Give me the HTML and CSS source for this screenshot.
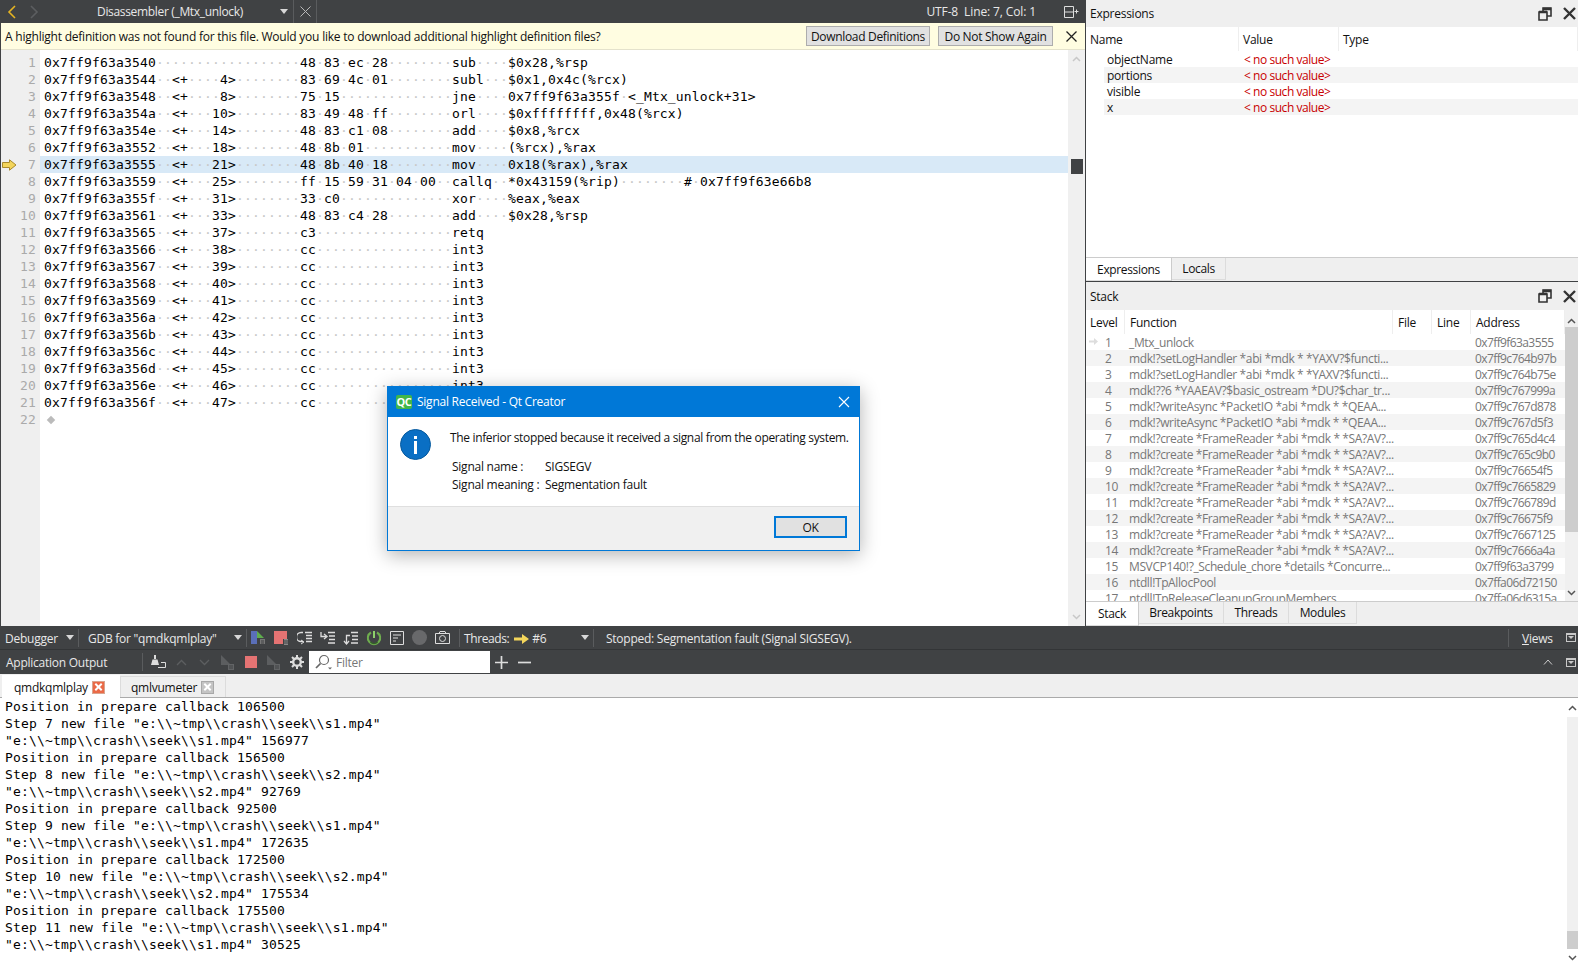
FILE: index.html
```html
<!DOCTYPE html>
<html lang="en">
<head>
<meta charset="UTF-8">
<title>Disassembler (_Mtx_unlock) - Qt Creator</title>
<link rel="stylesheet" href="styles.css">
</head>
<body>

<div class="app">
    <div class="upper">
        <div class="editor-area">
            <div class="doc-bar">
                <svg class="nav-back" width="10" height="14" viewBox="0 0 10 14"><path d="M8 1L2 7l6 6" fill="none" stroke="#e6b422" stroke-width="1.6"/></svg>
                <svg class="nav-fwd" width="10" height="14" viewBox="0 0 10 14"><path d="M2 1l6 6-6 6" fill="none" stroke="#5c5e60" stroke-width="1.6"/></svg>
                <span class="doc-title">Disassembler (_Mtx_unlock)</span>
                <span class="arrow doc-arrow"></span>
                <span class="doc-close">
                    <svg width="11" height="11" viewBox="0 0 11 11"><path d="M.5.500l10 10M10.500.500l-10 10" stroke="#b8b8b8"/></svg>
                </span>
                <span class="doc-info">UTF-8&nbsp; Line: 7, Col: 1</span>
                <svg class="split-ic" width="15" height="12" viewBox="0 0 15 12"><path d="M.5.5h9v11h-9zM.5 6h9" fill="none" stroke="#ddd"/><path d="M12.5 3.500v4M10.500 5.500h4" stroke="#ddd"/></svg>
            </div>
            <div class="info-bar">
                <span class="info-text">A highlight definition was not found for this file. Would you like to download additional highlight definition files?</span>
                <button class="info-btn btn-download">Download Definitions</button>
                <button class="info-btn btn-hide">Do Not Show Again</button>
                <svg class="info-close" width="11" height="11" viewBox="0 0 11 11"><path d="M.5.500l10 10M10.500.500l-10 10" stroke="#222" stroke-width="1.3"/></svg>
            </div>
            <div class="editor">
                <div class="gutter">
                    <div>1</div><div>2</div><div>3</div><div>4</div><div>5</div><div>6</div>
                    <div class="cur-num">
                        <svg class="cur-arrow" width="15" height="12" viewBox="0 0 15 12"><path d="M.5 3.500h7V.8L14 6l-6.500 5.200V8.500h-7z" fill="#f3d55b" stroke="#a8892c"/></svg>
                        7
                    </div>
                    <div>8</div><div>9</div><div>10</div><div>11</div><div>12</div><div>13</div><div>14</div>
                    <div>15</div><div>16</div><div>17</div><div>18</div><div>19</div><div>20</div><div>21</div><div>22</div>
                </div>
                <div class="code">
                    <div class="ln">0x7ff9f63a3540<i>··················</i>48<i>·</i>83<i>·</i>ec<i>·</i>28<i>········</i>sub<i>····</i>$0x28,%rsp</div>
                    <div class="ln">0x7ff9f63a3544<i>··</i>&lt;+<i>····</i>4&gt;<i>········</i>83<i>·</i>69<i>·</i>4c<i>·</i>01<i>········</i>subl<i>···</i>$0x1,0x4c(%rcx)</div>
                    <div class="ln">0x7ff9f63a3548<i>··</i>&lt;+<i>····</i>8&gt;<i>········</i>75<i>·</i>15<i>··············</i>jne<i>····</i>0x7ff9f63a355f<i>·</i>&lt;_Mtx_unlock+31&gt;</div>
                    <div class="ln">0x7ff9f63a354a<i>··</i>&lt;+<i>···</i>10&gt;<i>········</i>83<i>·</i>49<i>·</i>48<i>·</i>ff<i>········</i>orl<i>····</i>$0xffffffff,0x48(%rcx)</div>
                    <div class="ln">0x7ff9f63a354e<i>··</i>&lt;+<i>···</i>14&gt;<i>········</i>48<i>·</i>83<i>·</i>c1<i>·</i>08<i>········</i>add<i>····</i>$0x8,%rcx</div>
                    <div class="ln">0x7ff9f63a3552<i>··</i>&lt;+<i>···</i>18&gt;<i>········</i>48<i>·</i>8b<i>·</i>01<i>···········</i>mov<i>····</i>(%rcx),%rax</div>
                    <div class="ln ln-cur">0x7ff9f63a3555<i>··</i>&lt;+<i>···</i>21&gt;<i>········</i>48<i>·</i>8b<i>·</i>40<i>·</i>18<i>········</i>mov<i>····</i>0x18(%rax),%rax</div>
                    <div class="ln">0x7ff9f63a3559<i>··</i>&lt;+<i>···</i>25&gt;<i>········</i>ff<i>·</i>15<i>·</i>59<i>·</i>31<i>·</i>04<i>·</i>00<i>··</i>callq<i>··</i>*0x43159(%rip)<i>········</i>#<i>·</i>0x7ff9f63e66b8</div>
                    <div class="ln">0x7ff9f63a355f<i>··</i>&lt;+<i>···</i>31&gt;<i>········</i>33<i>·</i>c0<i>··············</i>xor<i>····</i>%eax,%eax</div>
                    <div class="ln">0x7ff9f63a3561<i>··</i>&lt;+<i>···</i>33&gt;<i>········</i>48<i>·</i>83<i>·</i>c4<i>·</i>28<i>········</i>add<i>····</i>$0x28,%rsp</div>
                    <div class="ln">0x7ff9f63a3565<i>··</i>&lt;+<i>···</i>37&gt;<i>········</i>c3<i>·················</i>retq</div>
                    <div class="ln">0x7ff9f63a3566<i>··</i>&lt;+<i>···</i>38&gt;<i>········</i>cc<i>·················</i>int3</div>
                    <div class="ln">0x7ff9f63a3567<i>··</i>&lt;+<i>···</i>39&gt;<i>········</i>cc<i>·················</i>int3</div>
                    <div class="ln">0x7ff9f63a3568<i>··</i>&lt;+<i>···</i>40&gt;<i>········</i>cc<i>·················</i>int3</div>
                    <div class="ln">0x7ff9f63a3569<i>··</i>&lt;+<i>···</i>41&gt;<i>········</i>cc<i>·················</i>int3</div>
                    <div class="ln">0x7ff9f63a356a<i>··</i>&lt;+<i>···</i>42&gt;<i>········</i>cc<i>·················</i>int3</div>
                    <div class="ln">0x7ff9f63a356b<i>··</i>&lt;+<i>···</i>43&gt;<i>········</i>cc<i>·················</i>int3</div>
                    <div class="ln">0x7ff9f63a356c<i>··</i>&lt;+<i>···</i>44&gt;<i>········</i>cc<i>·················</i>int3</div>
                    <div class="ln">0x7ff9f63a356d<i>··</i>&lt;+<i>···</i>45&gt;<i>········</i>cc<i>·················</i>int3</div>
                    <div class="ln">0x7ff9f63a356e<i>··</i>&lt;+<i>···</i>46&gt;<i>········</i>cc<i>·················</i>int3</div>
                    <div class="ln">0x7ff9f63a356f<i>··</i>&lt;+<i>···</i>47&gt;<i>········</i>cc<i>·················</i>int3</div>
                    <div class="ln"><span class="eof"></span></div>
                </div>
                <div class="editor-scroll">
                    <svg width="9" height="6" viewBox="0 0 9 6"><path d="M1 5l3.500-3.500L8 5" fill="none" stroke="#c8c8c8" stroke-width="1.500"/></svg>
                    <div class="scroll-mark"></div>
                    <svg class="scroll-down" width="9" height="6" viewBox="0 0 9 6"><path d="M1 1l3.500 3.500L8 1" fill="none" stroke="#c8c8c8" stroke-width="1.500"/></svg>
                </div>
            </div>
        </div>

        <div class="dock">
            <div class="pane pane-expr">
                <div class="pane-head">
                    <span>Expressions</span>
                    <svg class="float-ic" width="14" height="14" viewBox="0 0 14 14"><path d="M1 5h8v8H1zM5 5V1h8v8H9" fill="none" stroke="#333" stroke-width="1.600"/><path d="M1 5h8M5 2h8" stroke="#333" stroke-width="2.500"/></svg>
                    <svg class="close-ic" width="13" height="13" viewBox="0 0 13 13"><path d="M1 1l11 11M12 1L1 12" stroke="#333" stroke-width="2.400"/></svg>
                </div>
                <div class="expr-head">
                    <div>Name</div><div>Value</div><div>Type</div>
                </div>
                <div class="expr-row"><span>objectName</span><span class="no-val">&lt; no such value&gt;</span></div>
                <div class="expr-row alt"><span>portions</span><span class="no-val">&lt; no such value&gt;</span></div>
                <div class="expr-row"><span>visible</span><span class="no-val">&lt; no such value&gt;</span></div>
                <div class="expr-row alt"><span>x</span><span class="no-val">&lt; no such value&gt;</span></div>
            </div>
            <div class="tabs tabs-expr">
                <span class="tab tab-on tab-expressions">Expressions</span>
                <span class="tab tab-locals">Locals</span>
            </div>
            <div class="pane pane-stack">
                <div class="pane-head pane-head-stack">
                    <span>Stack</span>
                    <svg class="float-ic" width="14" height="14" viewBox="0 0 14 14"><path d="M1 5h8v8H1zM5 5V1h8v8H9" fill="none" stroke="#333" stroke-width="1.600"/><path d="M1 5h8M5 2h8" stroke="#333" stroke-width="2.500"/></svg>
                    <svg class="close-ic" width="13" height="13" viewBox="0 0 13 13"><path d="M1 1l11 11M12 1L1 12" stroke="#333" stroke-width="2.400"/></svg>
                </div>
                <div class="stack-body">
                    <div class="stack-table">
                        <div class="stack-head">
                            <div>Level</div><div>Function</div><div>File</div><div>Line</div><div>Address</div>
                        </div>
                        <div class="stack-row"><span class="lvl"><svg class="frame-arrow" width="9" height="7" viewBox="0 0 9 7"><path d="M0 2.500h5V0l4 3.500L5 7V4.500H0z" fill="#ddd"/></svg>1</span><span>_Mtx_unlock</span><span>0x7ff9f63a3555</span></div>
                        <div class="stack-row alt"><span class="lvl">2</span><span>mdk!?setLogHandler *abi *mdk * *YAXV?$functi...</span><span>0x7ff9c764b97b</span></div>
                        <div class="stack-row"><span class="lvl">3</span><span>mdk!?setLogHandler *abi *mdk * *YAXV?$functi...</span><span>0x7ff9c764b75e</span></div>
                        <div class="stack-row alt"><span class="lvl">4</span><span>mdk!??6 *YAAEAV?$basic_ostream *DU?$char_tr...</span><span>0x7ff9c767999a</span></div>
                        <div class="stack-row"><span class="lvl">5</span><span>mdk!?writeAsync *PacketIO *abi *mdk * *QEAA...</span><span>0x7ff9c767d878</span></div>
                        <div class="stack-row alt"><span class="lvl">6</span><span>mdk!?writeAsync *PacketIO *abi *mdk * *QEAA...</span><span>0x7ff9c767d5f3</span></div>
                        <div class="stack-row"><span class="lvl">7</span><span>mdk!?create *FrameReader *abi *mdk * *SA?AV?...</span><span>0x7ff9c765d4c4</span></div>
                        <div class="stack-row alt"><span class="lvl">8</span><span>mdk!?create *FrameReader *abi *mdk * *SA?AV?...</span><span>0x7ff9c765c9b0</span></div>
                        <div class="stack-row"><span class="lvl">9</span><span>mdk!?create *FrameReader *abi *mdk * *SA?AV?...</span><span>0x7ff9c76654f5</span></div>
                        <div class="stack-row alt"><span class="lvl">10</span><span>mdk!?create *FrameReader *abi *mdk * *SA?AV?...</span><span>0x7ff9c7665829</span></div>
                        <div class="stack-row"><span class="lvl">11</span><span>mdk!?create *FrameReader *abi *mdk * *SA?AV?...</span><span>0x7ff9c766789d</span></div>
                        <div class="stack-row alt"><span class="lvl">12</span><span>mdk!?create *FrameReader *abi *mdk * *SA?AV?...</span><span>0x7ff9c76675f9</span></div>
                        <div class="stack-row"><span class="lvl">13</span><span>mdk!?create *FrameReader *abi *mdk * *SA?AV?...</span><span>0x7ff9c7667125</span></div>
                        <div class="stack-row alt"><span class="lvl">14</span><span>mdk!?create *FrameReader *abi *mdk * *SA?AV?...</span><span>0x7ff9c7666a4a</span></div>
                        <div class="stack-row"><span class="lvl">15</span><span>MSVCP140!?_Schedule_chore *details *Concurre...</span><span>0x7ff9f63a3799</span></div>
                        <div class="stack-row alt"><span class="lvl">16</span><span>ntdll!TpAllocPool</span><span>0x7ffa06d72150</span></div>
                        <div class="stack-row"><span class="lvl">17</span><span>ntdll!TpReleaseCleanupGroupMembers</span><span>0x7ffa06d6315a</span></div>
                    </div>
                    <div class="stack-scroll">
                        <svg width="9" height="6" viewBox="0 0 9 6"><path d="M1 5l3.500-3.500L8 5" fill="none" stroke="#555" stroke-width="1.500"/></svg>
                        <div class="stack-thumb"></div>
                        <svg class="scroll-down" width="9" height="6" viewBox="0 0 9 6"><path d="M1 1l3.500 3.500L8 1" fill="none" stroke="#555" stroke-width="1.500"/></svg>
                    </div>
                </div>
            </div>
            <div class="tabs tabs-stack">
                <span class="tab tab-on tab-s1">Stack</span>
                <span class="tab tab-s2">Breakpoints</span>
                <span class="tab tab-s3">Threads</span>
                <span class="tab tab-s4">Modules</span>
            </div>
        </div>
    </div>

    <div class="bar debug-bar">
        <div class="combo combo-mode">Debugger<span class="arrow"></span></div>
        <div class="combo combo-engine">GDB for "qmdkqmlplay"<span class="arrow"></span></div>
        <span class="tool"><svg width="16" height="14" viewBox="0 0 16 14"><rect y="0" width="6" height="13" fill="#5a6fb8"/><path d="M6 0l7 7H6z" fill="#5fae4d"/><path d="M9 8h5v5H9z" fill="#777"/><path d="M10 10h3M10 12h3" stroke="#404244"/></svg></span>
        <span class="tool"><svg width="16" height="14" viewBox="0 0 16 14"><rect y="0" width="13" height="13" fill="#e57373"/><path d="M9 8h6v6H9z" fill="#404244"/><path d="M10 8h4v6h-4z" fill="#888"/><path d="M10 10h4M10 12h4" stroke="#404244"/></svg></span>
        <span class="tool"><svg width="15" height="14" viewBox="0 0 15 14" fill="none" stroke="#ddd"><path d="M6 1.500H4a4.500 4.500 0 0 0 0 9h2" stroke-width="1.300"/><path d="M4 9l3 2-3 2" /><path d="M8 1.500h7M9 4.500h6M9 7.500h6M9 10.500h6" stroke-width="1.300"/></svg></span>
        <span class="tool"><svg width="15" height="14" viewBox="0 0 15 14" fill="none" stroke="#ddd"><path d="M1 1v4.500h5" stroke-width="1.300"/><path d="M4 3l3 2.500L4 8" stroke-width="1.300"/><path d="M8 1.500h7M9 5h6M9 8.500h6M8 12h7" stroke-width="1.300"/></svg></span>
        <span class="tool"><svg width="15" height="14" viewBox="0 0 15 14" fill="none" stroke="#ddd"><path d="M7 4.500H3.500v8" stroke-width="1.300"/><path d="M1 10l2.500 3L6 10" stroke-width="1.300"/><path d="M8 1.500h7M9 5h6M9 8.500h6M8 12h7" stroke-width="1.300"/></svg></span>
        <span class="tool"><svg width="16" height="16" viewBox="0 0 16 16" fill="none"><path d="M5 2.500a6.200 6.200 0 1 0 6 0" stroke="#6fae4f" stroke-width="2"/><path d="M8 1v7" stroke="#8dd06a" stroke-width="2"/><path d="M4.500 12a5 5 0 0 0 7 0" stroke="#355e2a" stroke-width="1.500"/></svg></span>
        <span class="tool"><svg width="14" height="14" viewBox="0 0 14 14" fill="none" stroke="#ddd"><path d="M.5.500h13v13H.5z"/><path d="M3 4h8M3 7h5M3 10h3" stroke-width="1.200"/></svg></span>
        <span class="tool"><svg width="15" height="15" viewBox="0 0 15 15"><circle cx="7.500" cy="7.500" r="7.500" fill="#68696b"/></svg></span>
        <span class="tool"><svg width="15" height="13" viewBox="0 0 15 13" fill="none" stroke="#ddd"><path d="M.5 2.500h14v10H.5zM4 2.500l1-2h5l1 2"/><circle cx="7.500" cy="7.500" r="3"/></svg></span>
        <div class="threads">
            <span>Threads:</span>
            <svg width="15" height="10" viewBox="0 0 15 10"><path d="M0 3.500h8V0l7 5-7 5V6.500H0z" fill="#f3d55b"/></svg>
            <span class="thread-no">#6</span>
            <span class="arrow"></span>
        </div>
        <div class="status">Stopped: Segmentation fault (Signal SIGSEGV).</div>
        <div class="views"><u>V</u>iews</div>
        <span class="pane-btn"></span>
    </div>

    <div class="bar output-bar">
        <div class="output-title">Application Output</div>
        <span class="tool"><svg width="15" height="14" viewBox="0 0 15 14"><path d="M3 0h2v4H3z" fill="#ddd"/><path d="M1.500 4.500h5L8 10H0z" fill="#ddd"/><path d="M10 7.500h4.500v5H7" fill="none" stroke="#ddd"/></svg></span>
        <span class="tool"><svg width="11" height="7" viewBox="0 0 11 7"><path d="M1 6l4.500-4.500L10 6" fill="none" stroke="#5c5e60" stroke-width="1.300"/></svg></span>
        <span class="tool"><svg width="11" height="7" viewBox="0 0 11 7"><path d="M1 1l4.500 4.500L10 1" fill="none" stroke="#5c5e60" stroke-width="1.300"/></svg></span>
        <span class="tool"><svg width="14" height="15" viewBox="0 0 14 15"><path d="M0 0l10 10H0z" fill="#5c5e60"/><path d="M7 9h6v6H7z" fill="#626466"/><path d="M8 11h4M8 13h4" stroke="#404244"/></svg></span>
        <span class="tool"><span class="stop-square"></span></span>
        <span class="tool"><svg width="14" height="15" viewBox="0 0 14 15"><path d="M0 0l10 10H0z" fill="#5c5e60"/><path d="M7 9h6v6H7z" fill="#626466"/><path d="M8 11h4M8 13h4" stroke="#404244"/></svg></span>
        <span class="tool"><svg width="14" height="14" viewBox="0 0 14 14"><circle cx="7" cy="7" r="3.800" fill="none" stroke="#ddd" stroke-width="2.400"/><path d="M7 0v3M7 11v3M0 7h3M11 7h3M2 2l2 2M10 10l2 2M12 2l-2 2M4 10l-2 2" stroke="#ddd" stroke-width="2"/></svg></span>
        <div class="filter">
            <svg width="18" height="16" viewBox="0 0 18 16" fill="none" stroke="#666"><circle cx="9" cy="6" r="4.500" stroke-width="1.200"/><path d="M5.500 9.500L1 14" stroke-width="1.700"/><path d="M13 13.500h4l-2 2z" fill="#666" stroke="none"/></svg>
            <span>Filter</span>
        </div>
        <svg class="plus-ic" width="13" height="13" viewBox="0 0 13 13"><path d="M6.500 0v13M0 6.500h13" stroke="#ddd" stroke-width="1.700"/></svg>
        <svg class="minus-ic" width="13" height="13" viewBox="0 0 13 13"><path d="M0 6.500h13" stroke="#ddd" stroke-width="1.700"/></svg>
        <svg class="up-ic" width="10" height="6" viewBox="0 0 10 6"><path d="M1 5.500L5 1l4 4.500" fill="none" stroke="#ccc"/></svg>
        <span class="pane-btn"></span>
    </div>

    <div class="out-tabs">
        <span class="out-tab out-tab-on">qmdkqmlplay<span class="tab-x tab-x-red"></span></span>
        <span class="out-tab">qmlvumeter<span class="tab-x"></span></span>
    </div>

    <div class="output">
        <div class="output-text">
            <div>Position in prepare callback 106500</div>
            <div>Step 7 new file "e:\\~tmp\\crash\\seek\\s1.mp4"</div>
            <div>"e:\\~tmp\\crash\\seek\\s1.mp4" 156977</div>
            <div>Position in prepare callback 156500</div>
            <div>Step 8 new file "e:\\~tmp\\crash\\seek\\s2.mp4"</div>
            <div>"e:\\~tmp\\crash\\seek\\s2.mp4" 92769</div>
            <div>Position in prepare callback 92500</div>
            <div>Step 9 new file "e:\\~tmp\\crash\\seek\\s1.mp4"</div>
            <div>"e:\\~tmp\\crash\\seek\\s1.mp4" 172635</div>
            <div>Position in prepare callback 172500</div>
            <div>Step 10 new file "e:\\~tmp\\crash\\seek\\s2.mp4"</div>
            <div>"e:\\~tmp\\crash\\seek\\s2.mp4" 175534</div>
            <div>Position in prepare callback 175500</div>
            <div>Step 11 new file "e:\\~tmp\\crash\\seek\\s1.mp4"</div>
            <div>"e:\\~tmp\\crash\\seek\\s1.mp4" 30525</div>
        </div>
        <div class="output-scroll">
            <svg width="9" height="6" viewBox="0 0 9 6"><path d="M1 5l3.500-3.500L8 5" fill="none" stroke="#555" stroke-width="1.500"/></svg>
            <div class="output-track"></div>
            <div class="output-thumb"></div>
            <svg width="9" height="6" viewBox="0 0 9 6"><path d="M1 1l3.500 3.500L8 1" fill="none" stroke="#555" stroke-width="1.500"/></svg>
        </div>
    </div>

    <!-- message box floats over the editor -->
    <div class="dialog">
        <div class="dialog-title">
            <span class="qc-logo">QC</span>
            <span class="dialog-caption">Signal Received - Qt Creator</span>
            <svg class="dialog-x" width="12" height="12" viewBox="0 0 12 12"><path d="M1 1l10 10M11 1L1 11" stroke="#fff" stroke-width="1.100"/></svg>
        </div>
        <div class="dialog-body">
            <div class="info-ic"><span class="info-dot"></span><span class="info-stem"></span></div>
            <div class="dialog-msg">
                <p class="msg-lead">The inferior stopped because it received a signal from the operating system.</p>
                <div class="msg-grid">
                    <span>Signal name :</span><span>SIGSEGV</span>
                    <span>Signal meaning :</span><span>Segmentation fault</span>
                </div>
            </div>
        </div>
        <div class="dialog-foot">
            <button class="ok-btn">OK</button>
        </div>
    </div>
</div>

</body>
</html>
```

FILE: styles.css
```css
* {
    box-sizing: border-box;
}
body {
    margin: 0;
    font-family: "Open Sans", sans-serif;
    font-size: 12px;
    letter-spacing: -0.25px;
    color: #111;
    background: #404244;
}
.app {
    position: relative;
    width: 1578px;
    height: 963px;
    display: flex;
    flex-direction: column;
    overflow: hidden;
}
.upper {
    display: flex;
    height: 626px;
}

/* editor side */
.editor-area {
    width: 1086px;
    display: flex;
    flex-direction: column;
    border-left: 1px solid #404244;
    border-right: 1px solid #404244;
    background: #fff;
}
.doc-bar {
    height: 23px;
    margin-left: -1px;
    display: flex;
    align-items: center;
    background: #404244;
    color: #e8e8e8;
}
.nav-back {
    margin-left: 7px;
}
.nav-fwd {
    margin-left: 12px;
}
.doc-title {
    margin-left: 58px;
    width: 183px;
    letter-spacing: -0.33px;
}
.doc-close {
    margin-left: 5px;
    height: 23px;
    width: 24px;
    display: flex;
    align-items: center;
    justify-content: center;
    border-left: 1px solid #5a5c5e;
    border-right: 1px solid #5a5c5e;
}
.doc-info {
    margin-left: auto;
    margin-right: 28px;
    letter-spacing: -0.12px;
}
.split-ic {
    margin-right: 6px;
}
.arrow {
    display: inline-block;
    width: 0;
    height: 0;
    border-left: 4px solid transparent;
    border-right: 4px solid transparent;
    border-top: 5px solid #d8d8d8;
}
.info-bar {
    height: 27px;
    display: flex;
    align-items: center;
    padding-left: 4px;
    background: #fffde1;
    border-bottom: 1px solid #e4e2cc;
}
.info-text {
    width: 801px;
    letter-spacing: -0.22px;
}
.info-btn {
    height: 20px;
    padding: 0;
    font: inherit;
    letter-spacing: -0.32px;
    color: #111;
    background: #e1e1e1;
    border: 1px solid #adadad;
}
.btn-download {
    width: 124px;
}
.btn-hide {
    width: 115px;
    margin-left: 8px;
}
.info-close {
    margin-left: 13px;
}
.editor {
    flex: 1;
    display: flex;
    min-height: 0;
}
.gutter {
    width: 39px;
    padding-top: 4px;
    background: #efefef;
    font-family: "DejaVu Sans Mono", monospace;
    font-size: 13px;
    letter-spacing: 0.17px;
    line-height: 17px;
    text-align: right;
    color: #aaa;
}
.gutter div {
    height: 17px;
    padding-right: 4px;
}
.cur-num {
    position: relative;
}
.cur-arrow {
    position: absolute;
    left: 1px;
    top: 3px;
}
.code {
    flex: 1;
    padding-top: 4px;
    font-family: "DejaVu Sans Mono", monospace;
    font-size: 13px;
    letter-spacing: 0.17px;
    line-height: 17px;
    color: #000;
}
.ln {
    height: 17px;
    padding-left: 4px;
    white-space: pre;
}
.ln i {
    font-style: normal;
    color: #c8c8c8;
}
.ln-cur {
    background: #d8e9f7;
}
.eof {
    display: inline-block;
    width: 6px;
    height: 6px;
    margin-left: 4px;
    margin-bottom: 1px;
    background: #bbb;
    transform: rotate(45deg);
}
.editor-scroll {
    position: relative;
    width: 17px;
    padding-top: 6px;
    display: flex;
    flex-direction: column;
    align-items: center;
    background: #f0f0f0;
}
.scroll-mark {
    position: absolute;
    left: 3px;
    top: 109px;
    width: 12px;
    height: 15px;
    background: #404244;
}
.scroll-down {
    margin-top: auto;
    margin-bottom: 6px;
}

/* debugger docks */
.dock {
    width: 492px;
    display: flex;
    flex-direction: column;
    background: #fff;
}
.pane-expr {
    height: 257px;
}
.pane-head {
    height: 27px;
    padding-left: 4px;
    padding-right: 2px;
    display: flex;
    align-items: center;
    background: #efefef;
}
.pane-head-stack {
    height: 28px;
}
.float-ic {
    margin-left: auto;
    margin-right: 11px;
}
.expr-head {
    height: 24px;
    display: grid;
    grid-template-columns: 153px 100px 1fr;
    line-height: 26px;
}
.expr-head div {
    padding-left: 4px;
    height: 24px;
    border-right: 1px solid #eee;
}
.expr-row {
    height: 16px;
    margin-left: 18px;
    display: grid;
    grid-template-columns: 135px 1fr;
    line-height: 18px;
}
.expr-row span:first-child {
    padding-left: 3px;
}
.expr-row span:last-child {
    padding-left: 5px;
}
.alt {
    background: #f4f4f4;
}
.no-val {
    color: #c80000;
    letter-spacing: -0.45px;
}
.tabs {
    display: flex;
    background: #efefef;
}
.tabs-expr {
    height: 25px;
    border-top: 1px solid #ccc;
    border-bottom: 1px solid #404244;
}
.tabs-stack {
    flex: 1;
    border-top: 1px solid #ccc;
}
.tab {
    display: flex;
    align-items: center;
    justify-content: center;
    height: 22px;
    letter-spacing: -0.35px;
    border-right: 1px solid #dcdcdc;
    border-bottom: 1px solid #dcdcdc;
}
.tab-on {
    height: 24px;
    background: #fff;
    border-right: 1px solid #ccc;
}
.tab-expressions {
    width: 86px;
    padding-top: 1px;
    height: 23px;
}
.tab-locals {
    width: 54px;
}
.tab-s1 {
    width: 53px;
}
.tab-s2 {
    width: 85px;
}
.tab-s3 {
    width: 65px;
}
.tab-s4 {
    width: 68px;
}
.pane-stack {
    display: flex;
    flex-direction: column;
}
.stack-body {
    height: 291px;
    display: flex;
    overflow: hidden;
}
.stack-table {
    width: 479px;
}
.stack-head {
    height: 24px;
    display: grid;
    grid-template-columns: 39px 268px 39px 39px 94px;
    line-height: 26px;
}
.stack-head div {
    height: 24px;
    padding-left: 5px;
    border-right: 1px solid #eee;
}
.stack-head div:first-child {
    padding-left: 4px;
}
.stack-row {
    height: 16px;
    display: grid;
    grid-template-columns: 39px 346px 94px;
    line-height: 18px;
    color: #777;
    white-space: nowrap;
    letter-spacing: -0.38px;
}
.stack-row span:nth-child(2) {
    padding-left: 4px;
}
.stack-row span:nth-child(3) {
    padding-left: 4px;
    letter-spacing: -0.6px;
}
.lvl {
    position: relative;
    padding-left: 19px;
}
.frame-arrow {
    position: absolute;
    left: 3px;
    top: 4px;
}
.stack-scroll {
    width: 13px;
    padding-top: 8px;
    display: flex;
    flex-direction: column;
    align-items: center;
    background: #f0f0f0;
}
.stack-thumb {
    width: 100%;
    height: 205px;
    margin-top: 3px;
    background: #cdcdcd;
}
.stack-scroll .scroll-down {
    margin-bottom: 5px;
}

/* bottom bars */
.bar {
    height: 24px;
    flex: none;
    display: flex;
    align-items: center;
    color: #e8e8e8;
    background: #404244;
}
.debug-bar {
    border-bottom: 1px solid #333537;
}
.combo {
    height: 18px;
    padding-top: 2px;
    display: flex;
    align-items: center;
    justify-content: space-between;
    border-right: 1px solid #5a5c5e;
    padding-right: 4px;
}
.combo .arrow {
    margin-top: -2px;
}
.combo-mode {
    width: 79px;
    padding-left: 5px;
}
.combo-engine {
    width: 168px;
    padding-left: 9px;
}
.tool {
    width: 23px;
    height: 22px;
    flex: none;
    display: flex;
    align-items: center;
    justify-content: center;
}
.threads {
    width: 135px;
    height: 18px;
    padding-top: 2px;
    margin-left: 5px;
    padding-left: 4px;
    padding-right: 4px;
    display: flex;
    align-items: center;
    gap: 5px;
    border-left: 1px solid #5a5c5e;
    border-right: 1px solid #5a5c5e;
    letter-spacing: -0.4px;
}
.thread-no {
    margin-left: -2px;
}
.threads .arrow {
    margin-left: auto;
    margin-top: -2px;
}
.status {
    margin-left: 12px;
    padding-top: 2px;
}
.views {
    margin-left: auto;
    height: 18px;
    width: 58px;
    padding-left: 13px;
    line-height: 20px;
    border-left: 1px solid #5a5c5e;
}
.pane-btn {
    position: relative;
    width: 10px;
    height: 9px;
    margin-right: 2px;
    flex: none;
    border: 1px solid #c8c8c8;
    border-top-width: 2px;
}
.pane-btn::after {
    content: "";
    position: absolute;
    left: 1px;
    top: 1px;
    border-left: 3px solid transparent;
    border-right: 3px solid transparent;
    border-top: 3px solid #c8c8c8;
}
.output-title {
    width: 143px;
    height: 18px;
    padding-left: 6px;
    line-height: 20px;
    border-right: 1px solid #5a5c5e;
    margin-right: 4px;
}
.stop-square {
    width: 12px;
    height: 12px;
    background: #e57373;
}
.filter {
    width: 181px;
    height: 22px;
    margin-left: 1px;
    padding-left: 6px;
    display: flex;
    align-items: center;
    gap: 3px;
    background: #fff;
    color: #777;
}
.plus-ic {
    margin-left: 5px;
}
.minus-ic {
    margin-left: 10px;
}
.up-ic {
    margin-left: auto;
    margin-right: 13px;
}
.out-tabs {
    height: 24px;
    flex: none;
    display: flex;
    align-items: flex-end;
    padding-left: 2px;
    background: #efefef;
    border-bottom: 1px solid #aaa;
}
.out-tab {
    height: 21px;
    width: 106px;
    padding-left: 10px;
    display: flex;
    align-items: center;
    justify-content: flex-start;
    gap: 4px;
    border: 1px solid #dcdcdc;
    border-bottom: 0;
}
.out-tab-on {
    width: 118px;
    height: 23px;
    padding-left: 11px;
    background: #fff;
    border-color: #fff;
    margin-bottom: -1px;
}
.tab-x {
    position: relative;
    width: 13px;
    height: 13px;
    flex: none;
    background: #c4c4c4;
    border: 1px solid #a8a8a8;
}
.tab-x-red {
    background: #ea6a47;
    border-color: #d9a58f;
}
.tab-x::before,
.tab-x::after {
    content: "";
    position: absolute;
    left: 1px;
    top: 4px;
    width: 9px;
    height: 2px;
    background: #fff;
    transform: rotate(45deg);
}
.tab-x::after {
    transform: rotate(-45deg);
}
.output {
    flex: 1;
    display: flex;
    background: #fff;
    min-height: 0;
}
.output-text {
    flex: 1;
    padding-left: 5px;
    font-family: "DejaVu Sans Mono", monospace;
    font-size: 13px;
    letter-spacing: 0.17px;
    line-height: 17px;
    color: #000;
}
.output-text div {
    white-space: pre;
}
.output-scroll {
    width: 11px;
    padding-top: 7px;
    display: flex;
    flex-direction: column;
    align-items: center;
    background: #fff;
}
.output-track {
    flex: 1;
    width: 100%;
    margin-top: 6px;
    background: #f0f0f0;
}
.output-thumb {
    width: 100%;
    height: 18px;
    background: #cdcdcd;
}
.output-scroll svg:last-child {
    margin: 6px 0 2px;
}

/* message box */
.dialog {
    position: absolute;
    left: 387px;
    top: 386px;
    width: 473px;
    height: 165px;
    display: flex;
    flex-direction: column;
    background: #f0f0f0;
    border: 1px solid #0078d7;
    box-shadow: 0 4px 18px rgba(0, 0, 0, 0.3);
}
.dialog-title {
    height: 30px;
    flex: none;
    display: flex;
    align-items: center;
    padding-left: 8px;
    padding-right: 9px;
    padding-bottom: 1px;
    background: #0078d7;
    color: #fff;
}
.qc-logo {
    width: 16px;
    height: 14px;
    font-size: 11px;
    font-weight: 700;
    line-height: 14px;
    letter-spacing: -0.5px;
    text-align: center;
    color: #fff;
    background: #41b649;
    border-radius: 2px;
}
.dialog-caption {
    margin-left: 5px;
}
.dialog-x {
    margin-left: auto;
}
.dialog-body {
    height: 90px;
    flex: none;
    display: flex;
    padding-left: 12px;
    background: #fff;
    border-bottom: 1px solid #dfdfdf;
}
.info-ic {
    position: relative;
    width: 31px;
    height: 31px;
    margin-top: 12px;
    flex: none;
    border-radius: 50%;
    background: #0a6fc4;
    border: 1px solid #065a9e;
}
.info-dot {
    position: absolute;
    left: 13px;
    top: 6px;
    width: 3px;
    height: 3px;
    background: #fff;
}
.info-stem {
    position: absolute;
    left: 13px;
    top: 11px;
    width: 3px;
    height: 13px;
    background: #fff;
}
.dialog-msg {
    margin-left: 19px;
    padding-top: 13px;
}
.msg-lead {
    margin: 0 0 13px;
    line-height: 16px;
    white-space: nowrap;
    letter-spacing: -0.34px;
}
.msg-grid {
    display: grid;
    grid-template-columns: 93px auto;
    row-gap: 2px;
    margin-left: 2px;
    line-height: 16px;
}
.dialog-foot {
    flex: 1;
    display: flex;
    align-items: flex-start;
    justify-content: flex-end;
    padding-top: 9px;
    padding-right: 12px;
}
.ok-btn {
    width: 73px;
    height: 22px;
    padding: 0;
    font: inherit;
    letter-spacing: inherit;
    color: #111;
    background: #e1e1e1;
    border: 2px solid #0078d7;
}
```
